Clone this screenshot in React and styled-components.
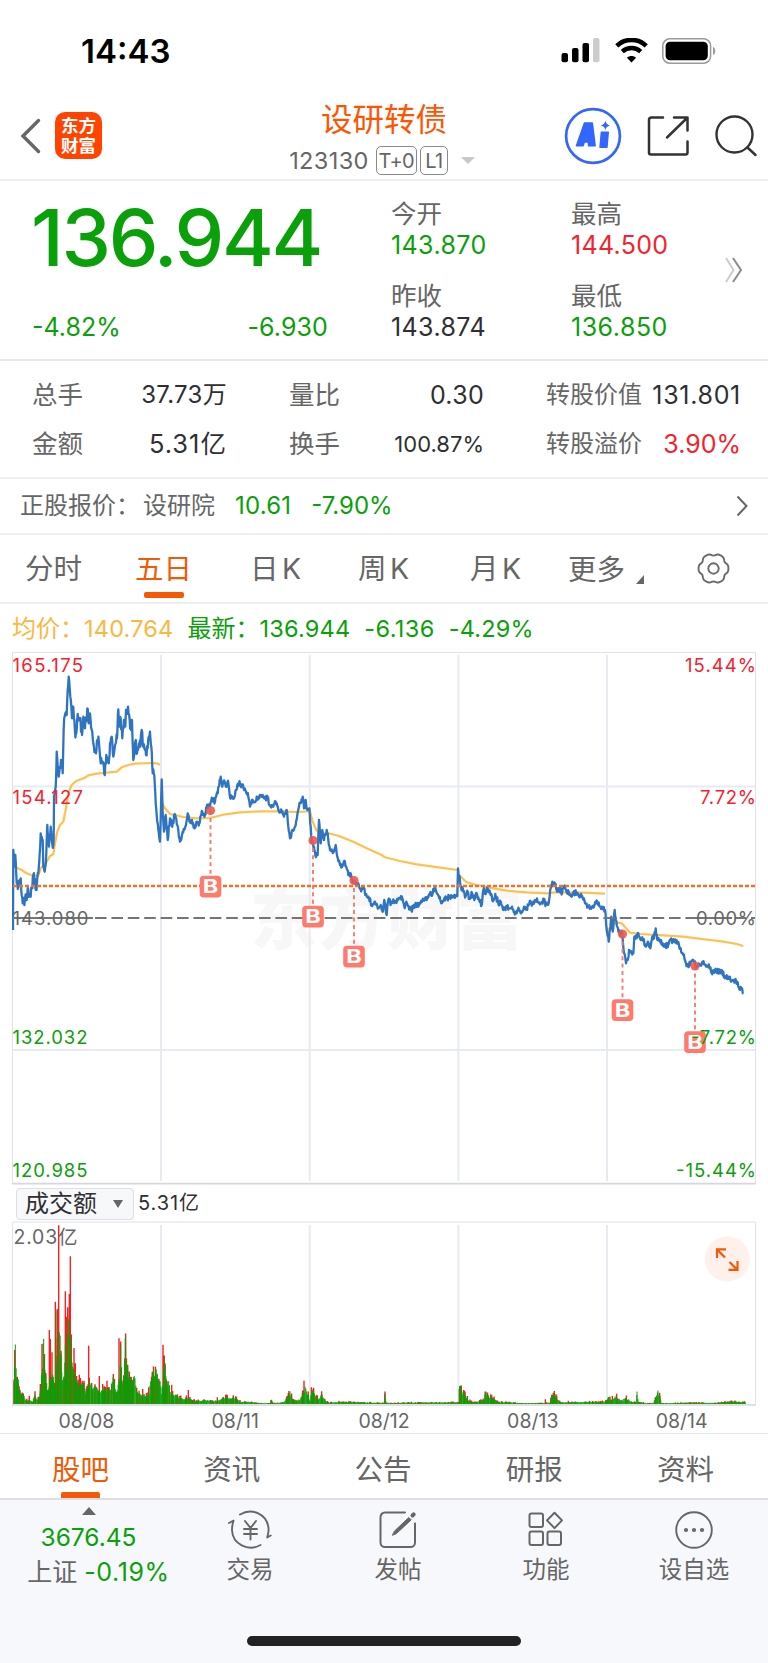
import React from "react";
import styled, { createGlobalStyle } from "styled-components";

const RED = "#f5222d";
const GREEN = "#0aa00a";
const ORANGE = "#f25a05";
const GRAY = "#666";
const DARK = "#2f2f33";

const GlobalStyle = createGlobalStyle`
  * {
    box-sizing: border-box;
  }

  body {
    margin: 0;
    background: #fff;
    font-family: Inter, "Noto Sans CJK SC", sans-serif;
    color: ${GRAY};
  }

  svg {
    display: block;
  }
`;

const Page = styled.div`
  width: 768px;
  height: 1663px;
  display: flex;
  flex-direction: column;
  overflow: hidden;
  white-space: nowrap;
`;

const Num = styled.span`
  color: ${({ color }) => color || "inherit"};
  font-size: ${({ $size }) => $size || 25}px;
  letter-spacing: ${({ $ls }) => $ls || 0}px;
`;

/* status bar */

const StatusBar = styled.div`
  height: 96px;
  padding: 6px 51px 0 81px;
  display: flex;
  align-items: center;
  color: #000;
`;

const Clock = styled.div`
  flex: 1;
  font-size: 33px;
  font-weight: 600;
`;

const StatusIcons = styled.div`
  display: flex;
  gap: 14px;
`;

/* header */

const Header = styled.header`
  height: 85px;
  display: grid;
  grid-template-columns: 1fr auto 1fr;
  border-bottom: 2px solid #eee;
`;

const HeaderLeft = styled.div`
  display: flex;
  align-items: center;
  gap: 14px;
  padding: 0 0 4px 20px;
`;

const Logo = styled.div`
  width: 47px;
  height: 47px;
  border-radius: 10px;
  background: #ff4400;
  color: #fff;
  font-weight: 700;
  font-size: 17.5px;
  line-height: 19.5px;
  text-align: center;
  padding-top: 4px;
`;

const HeaderCenter = styled.div`
  display: flex;
  flex-direction: column;
  align-items: center;
`;

const Title = styled.div`
  margin-top: 3px;
  font-size: 31.5px;
  line-height: 42px;
  color: #ff5500;
`;

const SubTitle = styled.div`
  display: flex;
  align-items: center;
  height: 30px;
  margin-top: 4px;
  padding-right: 4px;
`;

const Tag = styled.span`
  height: 29px;
  width: ${({ $w }) => $w}px;
  margin-left: ${({ $gap }) => $gap}px;
  border: 1px solid #8a8a8a;
  border-radius: 5px;
  font-size: 20px;
  line-height: 28px;
  letter-spacing: -0.6px;
  text-align: center;
`;

const Caret = styled.span`
  width: 0;
  height: 0;
  margin-left: 13px;
  border: 7px solid transparent;
  border-top-color: #c8c8c8;
  border-bottom-width: 0;
`;

const HeaderRight = styled.div`
  display: flex;
  align-items: center;
  justify-content: flex-end;
  padding: 0 11px 4px 0;
`;

/* quote */

const Quote = styled.section`
  height: 180px;
  display: grid;
  grid-template-columns: 359px 180px 154px 1fr;
  padding-left: 32px;
  border-bottom: 2px solid #e6eaef;
`;

const PriceBox = styled.div`
  color: ${GREEN};
`;

const Price = styled.div`
  margin: 15px 0 0 -1px;
  font-size: 79px;
  line-height: 82px;
  font-weight: 500;
  letter-spacing: -2.3px;
`;

const PriceChange = styled.div`
  width: 296px;
  margin-top: 32px;
  line-height: 34px;
  display: flex;
  justify-content: space-between;
`;

const QuoteColumn = styled.dl`
  margin: 0;
  padding-top: 16px;

  dt {
    font-size: 25.5px;
    line-height: 34px;
  }

  dd {
    margin: -1px 0 16px;
    line-height: 30px;
  }
`;

const QuoteMore = styled.div`
  padding-top: 75px;
`;

/* stats */

const Stats = styled.section`
  height: 118px;
  padding: 9px 27px 0 32px;
  border-bottom: 2px solid #f0f0f0;
  display: grid;
  grid-template-columns: 257px 257px 195px;
  grid-auto-rows: 49.5px;
`;

const Stat = styled.div`
  display: flex;
  align-items: center;
  justify-content: space-between;
  padding-right: 62px;
  font-size: ${({ $small }) => ($small ? 24 : 25.5)}px;
  line-height: 34px;

  &:nth-child(3n) {
    padding-right: 0;
  }
`;

/* underlying stock */

const Underlying = styled.section`
  height: 56px;
  padding: 0 20px;
  border-bottom: 2px solid #f0f0f0;
  display: flex;
  align-items: center;
  font-size: 24px;
  line-height: 34px;
`;

const Grow = styled.span`
  flex: 1;
`;

const Gap = styled.span`
  width: ${({ $w }) => $w}px;
`;

/* period tabs */

const Periods = styled.nav`
  height: 69px;
  padding-left: 25px;
  display: grid;
  grid-template-columns: 110px 115px 108px 112px 98px 129px 1fr;
  align-items: center;
  border-bottom: 2px solid #eee;
`;

const Period = styled.div`
  width: max-content;
  height: 67px;
  display: flex;
  flex-direction: column;
  align-items: center;
  font-size: 28.5px;
  line-height: 68px;
  word-spacing: -4.5px;
  color: ${({ $active }) => ($active ? ORANGE : GRAY)};

  &::after {
    content: "";
    display: ${({ $active }) => ($active ? "block" : "none")};
    width: 40px;
    height: 6px;
    margin-top: -11px;
    border-radius: 2px;
    background: ${ORANGE};
  }
`;

const More = styled.div`
  display: flex;
  align-items: flex-end;
  gap: 11px;
  font-size: 28.5px;
  line-height: 42px;
  padding-top: 2px;

  svg {
    margin-bottom: 7px;
  }
`;

/* chart */

const Legend = styled.div`
  height: 48px;
  padding: 1px 0 0 12px;
  display: flex;
  align-items: center;
  font-size: 24px;
  line-height: 34px;
  color: ${GREEN};
`;

const ChartFrame = styled.div`
  margin-left: 12px;
  width: 746px;
  height: ${({ $h }) => $h}px;
`;

const VolumeBar = styled.div`
  height: 36px;
  padding: 1px 0 0 16px;
  display: flex;
  align-items: center;
  gap: 4px;
  line-height: 31px;
  color: ${DARK};
`;

const VolumeSelect = styled.div`
  width: 118px;
  height: 32px;
  padding: 0 10px 0 8px;
  display: flex;
  align-items: center;
  justify-content: space-between;
  border: 1px solid #dcdfe4;
  border-radius: 4px;
  background: #f7f8fa;
  font-size: 24px;
`;

const Dates = styled.div`
  height: 29px;
  padding: 0 12px;
  display: grid;
  grid-template-columns: repeat(5, 1fr);
  text-align: center;
  font-size: 19.5px;
  line-height: 32px;
  border-bottom: 1px solid #e4e5e9;
`;

/* bottom */

const InfoTabs = styled.nav`
  height: 66px;
  padding: 0 7px 0 5px;
  display: grid;
  grid-template-columns: repeat(5, 1fr);
  border-bottom: 2px solid #dddfe4;
`;

const InfoTab = styled.div`
  display: flex;
  flex-direction: column;
  align-items: center;
  font-size: 28.5px;
  line-height: 72px;
  color: ${({ $active }) => ($active ? ORANGE : GRAY)};

  &::after {
    content: "";
    display: ${({ $active }) => ($active ? "block" : "none")};
    width: 39px;
    height: 6px;
    margin-top: -14px;
    border-radius: 2px 2px 0 0;
    background: ${ORANGE};
  }
`;

const Toolbar = styled.footer`
  flex: 1;
  background: #f7f8fb;
  display: flex;
  flex-direction: column;
  align-items: center;
`;

const ToolRow = styled.div`
  width: 768px;
  height: 136px;
  display: grid;
  grid-template-columns: 176px repeat(4, 148px);
`;

const Tool = styled.div`
  padding-top: 10px;
  display: flex;
  flex-direction: column;
  align-items: center;
  font-size: 23.5px;
  line-height: 34px;

  svg {
    margin-bottom: 3px;
  }
`;

const IndexBox = styled.div`
  padding: 7px 0 0 21px;
  display: flex;
  flex-direction: column;
  align-items: center;
  line-height: 35px;
  font-size: 25px;

  svg {
    margin: 0 20px 5px 0;
  }
`;

const IndexValue = styled.div`
  padding-right: 20px;
  font-size: 24.5px;
  color: ${GREEN};
`;

const HomeBar = styled.div`
  width: 274px;
  height: 10px;
  border-radius: 5px;
  background: #222;
`;

/* each run: origin in px, then x/y pairs in thirds of a px */
const PRICE_RUNS = [
  {
    x: 0,
    y: 640,
    pts: "39,870 40,630 43,680 46,645 50,730 55,742 62,715 68,790 75,775 80,780 85,750 92,770 100,705 108,750 115,700 119,640 122,580 128,600 130,680 134,695 139,640 142,555 147,620 152,560 157,612 161,600 162,470 167,440 170,335 176,410 183,360 188,400 191,265 196,220 200,225 203,150 206,110 211,170 216,235 220,200 225,275 229,280 233,222 240,240 246,285 250,230 255,265 262,205 266,250 270,220 275,270 280,310 288,340 292,300 297,310 302,370 308,365 313,403 319,345 326,370 330,310 335,290 340,350 347,310 351,295 355,208 358,260 362,235 367,295 372,240 376,260 378,210 384,200 389,240 393,270 396,240 400,360 406,305 411,340 417,310 421,320 425,270 430,320 438,345 443,325 450,275 454,320 458,400 463,405 467,490 473,550 480,605 485,418 488,520 492,575 497,525 503,600 510,535 517,560 524,522 532,555 540,605 548,575 556,560 563,520 570,545 576,540 584,565 591,545 598,550 607,515 615,525 620,500 630,500 637,475 645,485 653,460 662,410 667,440 674,425 680,440 684,422 689,465 698,475 705,465 712,435 720,430 730,440 738,455 745,470 750,500 756,480 764,485 770,470 778,475 783,465 792,475 803,475 812,500 820,500 827,485 835,510 845,515 852,530 860,510 865,560 870,595 877,570 885,560 892,525 900,490 908,470 912,505 917,480 922,510",
  },
  {
    x: 300,
    y: 740,
    pts: "28,205 32,260 35,300 42,320 46,345 53,345 57,240 62,310 67,270 72,300 80,270 85,300 90,330 100,335 107,315 112,350 120,375 127,380 133,362 140,385 145,405 152,400 157,420 165,425 175,430 182,450 190,440 197,465 207,475 217,498 225,485 235,505 242,495 248,515 253,480 260,525 265,480 273,490 280,478 288,488 298,475 306,470 313,500 319,485 326,500 334,510 342,495 352,498 360,488 370,480 380,480 390,462 398,460 405,442 412,462 418,475 424,490 432,478 442,475 450,470 458,472 466,468 472,468 474,385 479,410 483,440 490,455 497,468 503,455 508,475 516,460 523,480 530,460 537,480 545,495 550,450 558,460 562,442 572,465 580,480 586,462 595,490 602,485 610,510 618,500 628,505 636,500 643,515 650,520 657,508 665,515 672,500 680,505 688,490 697,492 705,480 714,485 722,490 731,480 738,495 746,490 752,445 757,425 766,435 770,450 778,445 786,460 792,440 798,450 806,455 815,470 825,455 835,465 845,468 855,490 863,500 875,500 884,492 893,488 900,500 908,500 915,510 920,570 926,605 930,570 934,530 938,575 944,510 948,540 952,560 960,580 967,580 972,640 978,670 983,660 987,630 995,635 1000,640 1003,590 1010,595 1015,580 1022,600 1030,600 1038,620 1043,605 1051,625 1057,590 1062,595 1067,565 1072,600 1080,600 1088,610 1097,620 1105,612 1115,600 1123,605 1132,605 1142,625 1150,645 1158,670 1170,675 1180,660 1190,680 1200,675 1212,670 1220,680 1228,680 1235,700 1245,690 1255,695 1265,690 1275,715 1285,710 1293,725 1300,720 1308,725 1315,740 1320,750 1325,745 1330,760",
  },
];

const AVG_RUNS = [
  {
    x: 0,
    y: 640,
    pts: "50,683 65,690 80,700 95,706 115,708 122,685 140,665 150,648 160,643 165,610 172,575 180,555 190,545 198,505 205,460 215,435 230,422 255,413 265,406 290,401 350,395 365,382 385,375 405,371 455,369 470,370 480,374",
  },
  {
    x: 0,
    y: 640,
    pts: "487,490 495,505 510,522 550,531 590,535 630,534 670,524 720,517 780,514 840,514 890,516 925,514 928,505",
  },
  {
    x: 300,
    y: 740,
    pts: "28,205 38,245 50,272 60,280 85,280 115,287 160,305 200,325 245,345 255,352 300,363 350,373 400,380 472,390",
  },
  {
    x: 300,
    y: 740,
    pts: "478,405 490,418 500,427 530,435 580,445 620,452 680,457 740,460 765,457 830,457 915,461",
  },
  {
    x: 300,
    y: 740,
    pts: "920,560 927,572 940,555 950,547 965,550 978,565 990,578 1020,582 1090,586 1150,590 1190,595 1230,600 1270,605 1310,612 1330,618",
  },
];

// turnover profile, "x,height" in thirds of a px
const VOL_GREEN =
  "42,60 46,178 50,80 55,65 62,30 70,25 78,10 90,10 98,8 104,26 112,13 118,18 122,50 127,100 131,218 135,105 140,60 145,40 150,70 152,110 155,70 160,70 164,50 168,255 171,100 175,60 178,195 183,170 187,70 192,80 196,160 200,80 204,245 208,200 210,110 214,180 218,100 222,110 225,80 231,70 238,50 244,60 250,65 256,30 262,50 268,65 275,50 285,55 292,40 300,35 308,45 316,45 325,40 332,50 341,75 347,40 352,40 358,80 362,155 366,70 372,70 377,185 383,95 390,80 398,65 405,80 410,40 420,30 432,25 445,25 452,60 458,90 464,95 472,85 480,75 484,30 488,60 493,125 499,65 506,60 513,30 522,30 530,25 540,18 552,13 565,18 575,13 590,8 610,12 640,8 660,12 670,18 695,16 710,18 720,6 750,6 770,3 810,2 815,14 820,3 850,5 862,18 870,33 880,8 900,13 908,28 915,45 925,25 930,8 936,43 945,28 955,13 965,26 975,10 985,4 1040,6 1152,3 1155,25 1158,3 1220,4 1376,5 1379,55 1386,35 1395,28 1405,10 1420,5 1440,8 1453,13 1458,38 1467,20 1475,18 1485,13 1495,4 1505,6 1570,2 1620,3 1650,4 1655,25 1663,30 1672,13 1685,4 1730,6 1800,6 1820,8 1825,20 1835,10 1845,22 1860,10 1880,16 1892,8 1908,6 1911,32 1916,6 1940,2 1960,3 1965,13 1974,40 1980,18 1985,2 2070,4 2150,3 2195,8 2237,5";
const VOL_RED =
  "44,162 52,82 60,42 88,25 105,38 121,60 126,180 148,222 151,195 156,155 166,307 172,285 176,536 196,338 200,262 203,290 208,330 211,443 222,168 226,122 238,88 241,78 252,70 266,175 298,84 321,70 340,90 357,197 376,197 383,118 392,82 428,45 446,50 489,178 492,90 515,58 565,42 652,20 720,12 865,33 912,70 934,50 966,28 1378,45 1440,12 1455,24 1465,24 1636,14 1657,27 1662,33 1705,10 1837,24 1850,31 1966,20";

const noise = (n) => {
  const v = Math.sin(n * 127.1) * 43758.5453;
  return v - Math.floor(v) - 0.5;
};

const parse = (s) => s.split(" ").map((p) => p.split(",").map(Number));

const toPath = ({ x, y, pts }) =>
  parse(pts).map(([px, py]) => `${(x + px / 3).toFixed(1)},${(y + py / 3).toFixed(1)}`).join(" ");

// fills the gaps between known ticks with small swings
const toTicks = ({ x, y, pts }) => {
  const list = parse(pts);
  const out = [];
  list.forEach(([px, py], i) => {
    out.push(`${(x + px / 3).toFixed(1)},${(y + py / 3).toFixed(1)}`);
    const next = list[i + 1];
    if (!next) return;
    const steps = Math.max(1, Math.round((next[0] - px) / 1.6));
    const amp = x === 0 && px < 460 ? 34 : 17;
    for (let k = 1; k < steps; k++) {
      const t = k / steps;
      const nx = px + (next[0] - px) * t;
      const ny = py + (next[1] - py) * t + noise(nx) * amp;
      out.push(`${(x + nx / 3).toFixed(1)},${(y + ny / 3).toFixed(1)}`);
    }
  });
  return out.join(" ");
};

const bar = (px, h) => `M${(px / 3).toFixed(2)} 1404V${(1404 - h / 3).toFixed(1)}`;

const volumePaths = () => {
  const list = parse(VOL_GREEN);
  let green = "";
  let red = parse(VOL_RED).map(([px, h]) => bar(px, h)).join("");
  let over = "";
  for (let i = 0; i < list.length - 1; i++) {
    const [x0, h0] = list[i];
    const [x1, h1] = list[i + 1];
    for (let px = x0; px < x1; px += 2.4) {
      const t = (px - x0) / (x1 - x0);
      const h = Math.max(2, (h0 + (h1 - h0) * t) * (1 + noise(px) * 0.35));
      green += bar(px, h);
      if (noise(px + 7) > 0.22) red += bar(px, h + 8 * Math.min(1, h / 20));
      if (noise(px + 3) > 0.33) over += bar(px, h * 0.7);
    }
  }
  return { green, red, over };
};

const MARKS = [
  [210.5, 810.5],
  [313, 840.5],
  [354, 880.5],
  [622.5, 934],
  [695, 966],
];

const DAY_LINES = [161, 309.7, 458.4, 607];

const LABELS = [
  { t: "165.175", y: 672, w: 70.5, c: RED },
  { t: "154.127", y: 804, w: 70.5, c: RED },
  { t: "143.080", y: 924.5, w: 76, c: GRAY },
  { t: "132.032", y: 1044, w: 75, c: GREEN },
  { t: "120.985", y: 1176.5, w: 75, c: GREEN },
];

const PERCENTS = [
  { t: "15.44%", y: 672, w: 71, c: RED },
  { t: "7.72%", y: 804, w: 56, c: RED },
  { t: "0.00%", y: 924.5, w: 60, c: GRAY },
  { t: "-7.72%", y: 1044, w: 65, c: GREEN },
  { t: "-15.44%", y: 1176.5, w: 80, c: GREEN },
];

function PriceChart() {
  return (
    <svg width="746" height="533" viewBox="12 652 746 533" fontFamily='Inter, "Noto Sans CJK SC", sans-serif'>
      <text x="250" y="944" fontSize="67" fontWeight="900" fill="#f7f7f7" textLength="273">
        东方财富
      </text>
      <path d="M12 786.5H756M12 1050H756" stroke="#e8ecf2" strokeWidth="1.8" />
      {DAY_LINES.map((x) => (
        <path key={x} d={`M${x} 655V1181`} stroke="#e6eaf1" strokeWidth="1.9" />
      ))}
      <path d="M12.5 1184V652.5H755.5V1184" fill="none" stroke="#dfe2e8" />
      <path d="M12 1183.6H756" stroke="#d4d7db" strokeWidth="1.6" />
      {AVG_RUNS.map((run) => (
        <polyline key={run.pts} points={toPath(run)} fill="none" stroke="#ffc04d" strokeWidth="2.2" strokeLinejoin="round" />
      ))}
      <polyline
        points={PRICE_RUNS.map(toTicks).join(" ")}
        fill="none"
        stroke="#2f74c0"
        strokeWidth="2.3"
        strokeLinejoin="round"
      />
      <path d="M13 886H755" stroke="#f2702a" strokeWidth="2.3" strokeDasharray="4 2" />
      <path d="M95 918H755" stroke="#757575" strokeWidth="2.2" strokeDasharray="11.6 4.8" />
      <path d="M13 918H93M697 918H732" stroke="#757575" strokeWidth="2" />
      {MARKS.map(([x, y]) => (
        <g key={x}>
          <path d={`M${x} ${y}v66`} stroke="#ff7866" strokeWidth="1.9" strokeDasharray="4 3.4" />
          <circle cx={x} cy={y} r="4.6" fill="#e8574f" fillOpacity="0.88" />
          <rect x={x - 10.8} y={y + 65.2} width="21.6" height="21.8" rx="4" fill="#ff7a6b" />
          <text x={x} y={y + 82.8} textAnchor="middle" fontSize="19" fontWeight="700" fill="#fff" textLength="15.5" lengthAdjust="spacingAndGlyphs">
            B
          </text>
        </g>
      ))}
      {LABELS.map(({ t, y, w, c }) => (
        <text key={t} x="12.5" y={y} fontSize="18.5" fill={c} textLength={w}>
          {t}
        </text>
      ))}
      {PERCENTS.map(({ t, y, w, c }) => (
        <text key={t} x={756 - w} y={y} fontSize="18.5" fill={c} textLength={w}>
          {t}
        </text>
      ))}
    </svg>
  );
}

function VolumeChart() {
  const { green, red, over } = volumePaths();
  return (
    <svg width="746" height="185" viewBox="12 1221 746 185" fontFamily='Inter, "Noto Sans CJK SC", sans-serif'>
      {DAY_LINES.map((x) => (
        <path key={x} d={`M${x} 1225V1404`} stroke="#e6eaf1" strokeWidth="1.9" />
      ))}
      <path d="M12.5 1405V1222H755.5V1405" fill="none" stroke="#dfe2e8" />
      <text x="13.5" y="1244" fontSize="19.5" fill={GRAY} textLength="64">
        2.03亿
      </text>
      <path d={red} stroke="#fa1e1e" strokeWidth="1.4" />
      <path d={green} stroke="#06a006" strokeWidth="1" />
      <path d={over} stroke="#5f7a00" strokeWidth="0.6" />
      <path d="M12 1405H756" stroke="#d4d7db" strokeWidth="1.6" />
      <circle cx="727.3" cy="1259" r="22.5" fill="#fef1eb" />
      <path
        d="M725 1257.5l-7.6-7.6M717 1258v-8.6h9M729.5 1262l7.6 7.6M728.5 1269.9h9v-9"
        fill="none"
        stroke={ORANGE}
        strokeWidth="2.2"
      />
    </svg>
  );
}

const SignalIcon = () => (
  <svg width="40" height="25" viewBox="0 0 40 25">
    <rect x="0.5" y="15" width="6.5" height="9.3" rx="2" />
    <rect x="11" y="10" width="6.5" height="14.3" rx="2" />
    <rect x="21.5" y="5" width="6.5" height="19.3" rx="2" />
    <rect x="32" y="0" width="6.5" height="24.3" rx="2" fill="#ccc" />
  </svg>
);

const WifiIcon = () => (
  <svg width="33" height="25" viewBox="0 0 33 25" fill="none" stroke="#000">
    <path d="M1.8 7.8C10 0 23 0 31.2 7.8" strokeWidth="4.6" />
    <path d="M7.3 13.6C12.5 8.8 20.5 8.8 25.7 13.6" strokeWidth="4.4" />
    <path d="M16.5 24.5l-4.6-4.7c2.6-2.4 6.6-2.4 9.2 0z" fill="#000" stroke="none" />
  </svg>
);

const BatteryIcon = () => (
  <svg width="55" height="26" viewBox="0 0 55 26">
    <rect x="0.8" y="0.8" width="47.8" height="24.4" rx="7" fill="none" stroke="#9a9a9a" strokeWidth="1.5" />
    <rect x="3.6" y="3.8" width="42.2" height="18.4" rx="4.5" />
    <path d="M51 9c3 1 3 7 0 8z" fill="#9a9a9a" />
  </svg>
);

const BackIcon = () => (
  <svg width="21" height="36" viewBox="0 0 21 36" fill="none" stroke="#666" strokeWidth="3.4" strokeLinecap="round">
    <path d="M18.5 2.5L3 18l15.5 15.5" />
  </svg>
);

const AiIcon = () => (
  <svg width="58" height="58" viewBox="0 0 58 58">
    <circle cx="29" cy="29" r="26.9" fill="none" stroke="#3366ff" strokeWidth="2.7" />
    <path
      d="M12.5 38.8l8-22.8h7.8l2.8 22.8h-6.4l-.4-3.8h-4l-1.3 3.8zM22 29.8h2.3l-.4-5z"
      fill="#3366ff"
      stroke="#3366ff"
      strokeWidth="1.6"
      strokeLinejoin="round"
      fillRule="evenodd"
    />
    <path d="M37.3 25.2h7l-1.3 15h-7z" fill="#3366ff" stroke="#3366ff" strokeWidth="1.4" strokeLinejoin="round" />
    <path d="M41.4 13.8c.7 2.9 1.6 3.8 4.6 4.7-3 .9-3.9 1.8-4.6 4.7-.7-2.9-1.6-3.8-4.6-4.7 3-.9 3.9-1.8 4.6-4.7z" fill="#3366ff" />
  </svg>
);

const ShareIcon = () => (
  <svg width="42" height="42" viewBox="0 0 42 42" fill="none" stroke="#333" strokeWidth="2.5" strokeLinecap="round" strokeLinejoin="round">
    <path d="M16 2.5H4.5a2.5 2.5 0 0 0-2.5 2.5v32.5a2 2 0 0 0 2 2h34.5a2 2 0 0 0 2-2V26.5" />
    <path d="M27 2.5h13.5v13M39.5 3.5L20 22.5" />
  </svg>
);

const SearchIcon = () => (
  <svg width="42" height="42" viewBox="0 0 42 42" fill="none" stroke="#333" strokeWidth="2.4" strokeLinecap="round">
    <circle cx="19.5" cy="19.5" r="18" />
    <path d="M32.5 32.5l8 7.5" />
  </svg>
);

// six-lobed outline
const gearPoints = Array.from({ length: 72 }, (_, i) => {
  const a = (i * Math.PI) / 36;
  const r = 14.2 + Math.cos(6 * a) - 0.3 * Math.cos(12 * a);
  return `${(r * Math.cos(a)).toFixed(2)},${(r * Math.sin(a)).toFixed(2)}`;
}).join(" ");

const GearIcon = () => (
  <svg width="33" height="31" viewBox="-16.5 -15.5 33 31" fill="none" stroke="#6a6a6a" strokeWidth="1.9" strokeLinejoin="round">
    <polygon points={gearPoints} />
    <circle r="5.2" />
  </svg>
);

const TradeIcon = () => (
  <svg width="44" height="40" viewBox="0 0 44 40" fill="none" stroke="#666" strokeWidth="1.9" strokeLinecap="round" strokeLinejoin="round">
    <path d="M12 4.5C24-2.5 39 4 40.5 18c.3 3-.2 6-1.3 9.5l3.5-2" />
    <path d="M32.5 35C20 42 4.5 34 4 20c0-4 .6-6.5 1.5-9.3L1 13" />
    <path d="M17 11l5.5 7 5.5-7M22.5 18v11.5M16 19h13M16 24h13" />
  </svg>
);

const PostIcon = () => (
  <svg width="40" height="40" viewBox="0 0 40 40" fill="none" stroke="#666" strokeWidth="2" strokeLinecap="round">
    <path d="M27 2.5H7A4.5 4.5 0 0 0 2.5 7v25.5A4.5 4.5 0 0 0 7 37h25.5a4.5 4.5 0 0 0 4.5-4.5V13.5" />
    <path d="M14.5 25l2-4L30.8 7.5l2.4 2.4L18.5 23.5z" fill="#666" strokeWidth="1" />
    <path d="M34.5 5.5l1.2-1.2" strokeWidth="4" />
  </svg>
);

const AppsIcon = () => (
  <svg width="36" height="40" viewBox="0 0 36 40" fill="none" stroke="#666" strokeWidth="2" strokeLinejoin="round">
    <rect x="1.5" y="3.5" width="13.5" height="13.5" rx="2" />
    <rect x="1.5" y="21.5" width="13.5" height="13.5" rx="2" />
    <rect x="19.5" y="21.5" width="13.5" height="13.5" rx="2" />
    <path d="M26.5 2.7l7.5 7.7-7.5 7.7-7.5-7.7z" />
  </svg>
);

const DotsIcon = () => (
  <svg width="40" height="40" viewBox="0 0 40 40" fill="none" stroke="#666" strokeWidth="1.9">
    <circle cx="20" cy="20" r="17.8" />
    <g fill="#666" stroke="none">
      <circle cx="12" cy="20" r="2.1" />
      <circle cx="20" cy="20" r="2.1" />
      <circle cx="28" cy="20" r="2.1" />
    </g>
  </svg>
);

export default function App() {
  return (
    <>
      <GlobalStyle />
      <Page>
        <StatusBar>
          <Clock>14:43</Clock>
          <StatusIcons>
            <SignalIcon />
            <WifiIcon />
            <BatteryIcon />
          </StatusIcons>
        </StatusBar>

        <Header>
          <HeaderLeft>
            <BackIcon />
            <Logo>
              东方
              <br />
              财富
            </Logo>
          </HeaderLeft>
          <HeaderCenter>
            <Title>设研转债</Title>
            <SubTitle>
              <Num $size={23.5} $ls={0.4}>123130</Num>
              <Tag $gap={7} $w={41}>T+0</Tag>
              <Tag $gap={3} $w={28}>L1</Tag>
              <Caret />
            </SubTitle>
          </HeaderCenter>
          <HeaderRight>
            <AiIcon />
            <Gap $w={25} />
            <ShareIcon />
            <Gap $w={26} />
            <SearchIcon />
          </HeaderRight>
        </Header>

        <Quote>
          <PriceBox>
            <Price>136.944</Price>
            <PriceChange>
              <Num>-4.82%</Num>
              <Num $ls={0.1}>-6.930</Num>
            </PriceChange>
          </PriceBox>
          <QuoteColumn>
            <dt>今开</dt>
            <dd><Num color={GREEN} $ls={0.4}>143.870</Num></dd>
            <dt>昨收</dt>
            <dd><Num color={DARK} $ls={0.4}>143.874</Num></dd>
          </QuoteColumn>
          <QuoteColumn>
            <dt>最高</dt>
            <dd><Num color={RED} $ls={0.3}>144.500</Num></dd>
            <dt>最低</dt>
            <dd><Num color={GREEN} $ls={0.5}>136.850</Num></dd>
          </QuoteColumn>
          <QuoteMore>
            <svg width="20" height="28" viewBox="0 0 20 28" fill="none" strokeWidth="2">
              <path d="M1 2l7.5 12L1 26" stroke="#ccc" />
              <path d="M8 2l8 12-8 12" stroke="#8c8c8c" />
            </svg>
          </QuoteMore>
        </Quote>

        <Stats>
          <Stat>总手<Num color={DARK} $size={24} $ls={0.3}>37.73万</Num></Stat>
          <Stat>量比<Num color={DARK} $ls={0.3}>0.30</Num></Stat>
          <Stat $small>转股价值<Num color={DARK} $ls={0.7}>131.801</Num></Stat>
          <Stat>金额<Num color={DARK} $size={25.5} $ls={1}>5.31亿</Num></Stat>
          <Stat>换手<Num color={DARK} $size={22}>100.87%</Num></Stat>
          <Stat $small>转股溢价<Num color={RED}>3.90%</Num></Stat>
        </Stats>

        <Underlying>
          正股报价：
          <Gap $w={3} />
          设研院
          <Gap $w={20} />
          <Num color={GREEN} $size={24} $ls={0.2}>10.61</Num>
          <Gap $w={20} />
          <Num color={GREEN} $size={24}>-7.90%</Num>
          <Grow />
          <svg width="12" height="22" viewBox="0 0 12 22" fill="none" stroke="#666" strokeWidth="2">
            <path d="M1.5 1.5L10.5 11l-9 9.5" />
          </svg>
        </Underlying>

        <Periods>
          <Period>分时</Period>
          <Period $active>五日</Period>
          <Period>日 K</Period>
          <Period>周 K</Period>
          <Period>月 K</Period>
          <More>
            更多
            <svg width="8" height="9" viewBox="0 0 8 9">
              <path d="M8 0v9H0z" fill="#666" />
            </svg>
          </More>
          <GearIcon />
        </Periods>

        <Legend>
          <Num color="#fbb83f" $size={24}>均价：</Num>
          <Num color="#fbb83f" $size={23.5} $ls={0.2}>140.764</Num>
          <Gap $w={14} />
          最新：
          <Num $size={23.5} $ls={0.2}>136.944</Num>
          <Gap $w={14} />
          <Num $size={23.5} $ls={0.4}>-6.136</Num>
          <Gap $w={14} />
          <Num $size={23.5} $ls={0.2}>-4.29%</Num>
        </Legend>

        <ChartFrame $h={533}>
          <PriceChart />
        </ChartFrame>
        <VolumeBar>
          <VolumeSelect>
            成交额
            <svg width="10" height="8" viewBox="0 0 10 8">
              <path d="M0 0h10L5 8z" fill="#666" />
            </svg>
          </VolumeSelect>
          <Num $size={20} $ls={0.9}>5.31亿</Num>
        </VolumeBar>
        <ChartFrame $h={184}>
          <VolumeChart />
        </ChartFrame>
        <Dates>
          <span>08/08</span>
          <span>08/11</span>
          <span>08/12</span>
          <span>08/13</span>
          <span>08/14</span>
        </Dates>

        <InfoTabs>
          <InfoTab $active>股吧</InfoTab>
          <InfoTab>资讯</InfoTab>
          <InfoTab>公告</InfoTab>
          <InfoTab>研报</InfoTab>
          <InfoTab>资料</InfoTab>
        </InfoTabs>

        <Toolbar>
          <ToolRow>
            <IndexBox>
              <svg width="14" height="8" viewBox="0 0 14 8">
                <path d="M7 0l7 8H0z" fill="#666" />
              </svg>
              <IndexValue>3676.45</IndexValue>
              <div>
                上证 <Num color={GREEN} $ls={0.6}>-0.19%</Num>
              </div>
            </IndexBox>
            <Tool><TradeIcon />交易</Tool>
            <Tool><PostIcon />发帖</Tool>
            <Tool><AppsIcon />功能</Tool>
            <Tool><DotsIcon />设自选</Tool>
          </ToolRow>
          <HomeBar />
        </Toolbar>
      </Page>
    </>
  );
}
